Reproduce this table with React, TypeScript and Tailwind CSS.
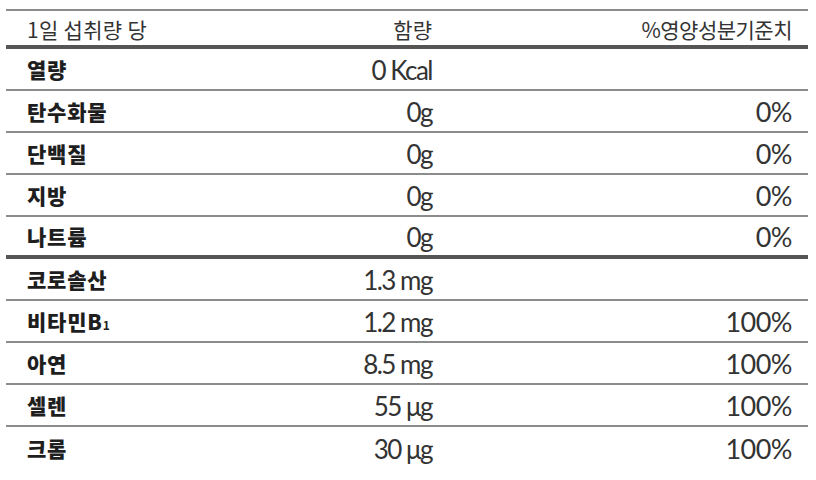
const rows = [
  { name: '열량', amount: '0 Kcal', pct: '' },
  { name: '탄수화물', amount: '0g', pct: '0%' },
  { name: '단백질', amount: '0g', pct: '0%' },
  { name: '지방', amount: '0g', pct: '0%' },
  { name: '나트륨', amount: '0g', pct: '0%', thick: true },
  { name: '코로솔산', amount: '1.3 mg', pct: '' },
  { name: 'B1', amount: '1.2 mg', pct: '100%' },
  { name: '아연', amount: '8.5 mg', pct: '100%' },
  { name: '셀렌', amount: '55 μg', pct: '100%' },
  { name: '크롬', amount: '30 μg', pct: '100%', last: true },
]

const kr = "font-['Noto_Sans_CJK_KR',sans-serif]"
const num = "font-['Lato','Noto_Sans_CJK_KR',sans-serif]"

function Label({ name }: { name: string }) {
  if (name === 'B1') {
    return (
      <span>
        비타민B<span className="text-[12px] font-bold">1</span>
      </span>
    )
  }
  return <span>{name}</span>
}

export default function App() {
  return (
    <div className="w-[816px] h-[480px] bg-white overflow-hidden pt-[9px]">
      <div className="mx-[6px] w-[802px] border-t-2 border-[#8c8c8c]">
        {/* header */}
        <div className={`flex items-center h-[38px] border-b-4 border-[#555] text-[21px] text-[#333] pt-[4px] ${kr}`}>
          <div className="w-[300px] pl-[21px] tracking-[0.3px]">1일 섭취량 당</div>
          <div className="w-[126px] text-right">함량</div>
          <div className="flex-1 text-right pr-[16px] tracking-[-0.5px]">%영양성분기준치</div>
        </div>
        {rows.map((r) => (
          <div
            key={r.name}
            className={`flex items-center h-[42px] pt-[2px] ${
              r.last ? '' : r.thick ? 'border-b-4 border-[#555]' : 'border-b-2 border-[#8c8c8c]'
            }`}
          >
            <div className={`w-[300px] pl-[21px] text-[21px] font-extrabold text-[#1e1e1e] tracking-[0.8px] ${kr}`}>
              <Label name={r.name} />
            </div>
            <div className={`w-[126px] text-right text-[26px] text-[#333] tracking-[-1.5px] ${num}`}>
              {r.amount}
            </div>
            <div className={`flex-1 text-right pr-[16px] text-[27px] text-[#333] tracking-[-0.5px] ${num}`}>
              {r.pct}
            </div>
          </div>
        ))}
      </div>
    </div>
  )
}
